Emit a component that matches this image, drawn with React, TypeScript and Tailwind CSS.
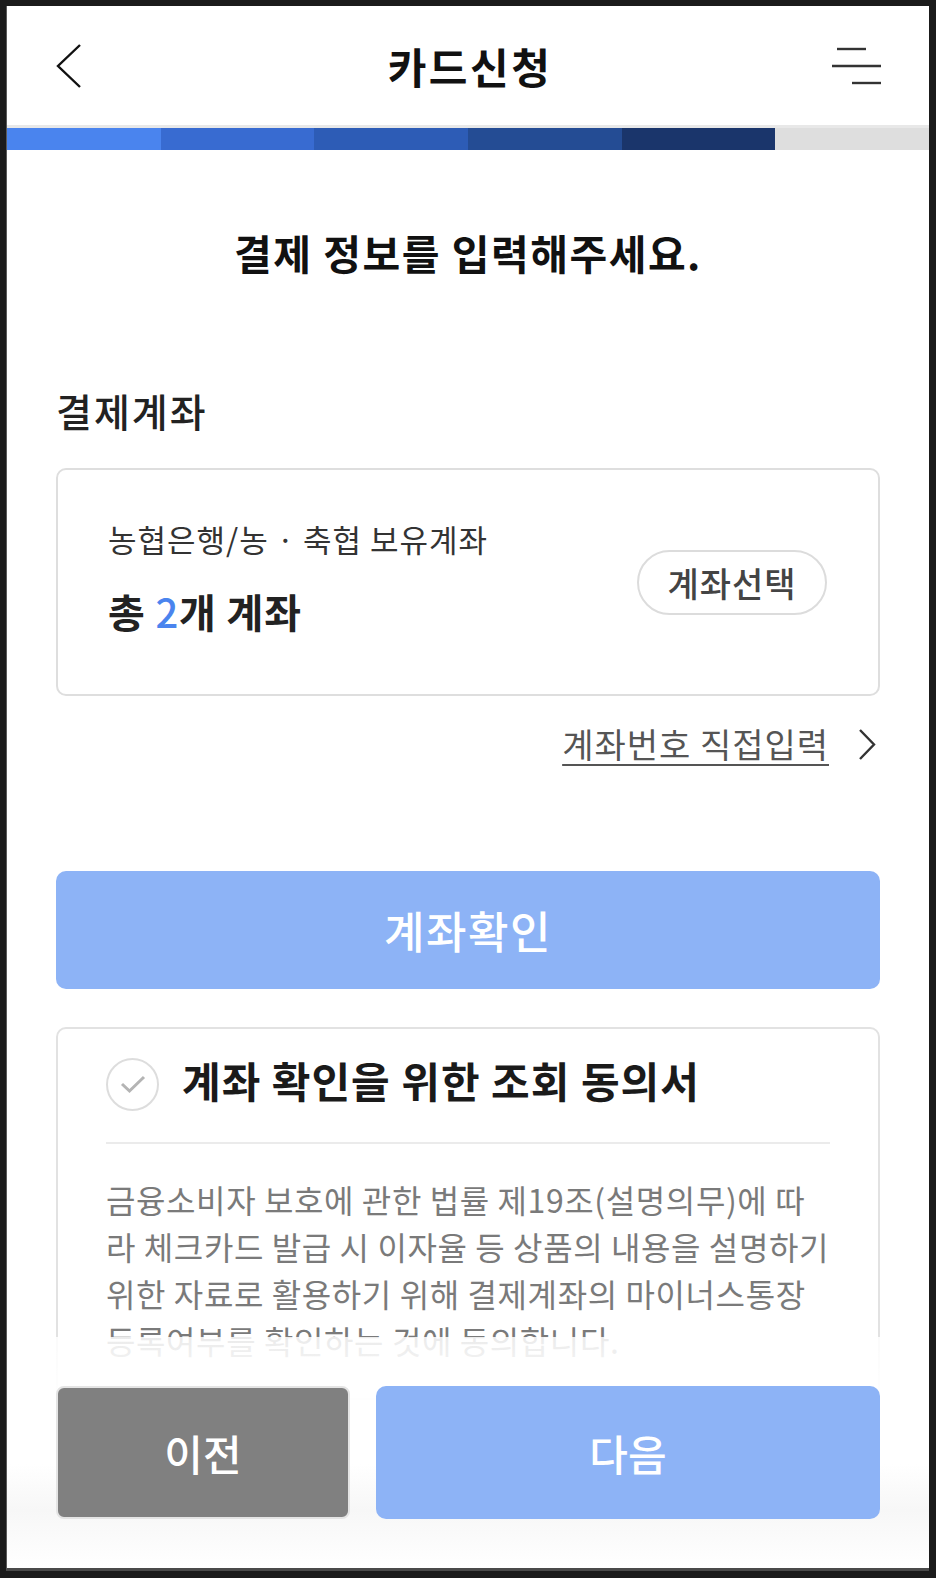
import React from "react";

const steps = ["bg-[#4a84ee]", "bg-[#386bd1]", "bg-[#2d5cb6]", "bg-[#244c94]", "bg-[#1a356b]", "bg-[#dedede]"];

const consentLines = [
  "금융소비자 보호에 관한 법률 제19조(설명의무)에 따",
  "라 체크카드 발급 시 이자율 등 상품의 내용을 설명하기",
  "위한 자료로 활용하기 위해 결제계좌의 마이너스통장",
  "등록여부를 확인하는 것에 동의합니다.",
];

function BackIcon() {
  return (
    <svg width="26" height="44" viewBox="0 0 26 44" fill="none">
      <polyline points="24,1 2,22 24,43" stroke="#111" strokeWidth="2.4" />
    </svg>
  );
}

function MenuIcon() {
  return (
    <svg width="52" height="40" viewBox="0 0 52 40" fill="none" stroke="#333" strokeWidth="2.4">
      <line x1="5" y1="3" x2="34" y2="3" />
      <line x1="0" y1="20" x2="49" y2="20" />
      <line x1="20" y1="37" x2="49" y2="37" />
    </svg>
  );
}

export default function App() {
  return (
    <div
      className="w-[936px] h-[1578px] bg-[#1b1b1b] pt-[6px] pl-[6px] pr-[7px] pb-[7px]"
      style={{ fontFamily: '"Noto Sans CJK KR", "Noto Sans", sans-serif' }}
    >
      <div className="relative h-[1565px] bg-white border-l border-[#5a5a5a] border-b-[3px] border-b-[#4a4a4a] overflow-hidden">
        {/* header */}
        <div className="h-[119px] flex items-center pl-[49px] pr-[45px]">
          <div className="w-[60px]">
            <BackIcon />
          </div>
          <h1 className="flex-1 text-center text-[42px] tracking-[2.5px] font-bold text-[#111]">카드신청</h1>
          <div className="w-[60px] flex justify-end">
            <MenuIcon />
          </div>
        </div>
        <div className="h-[3px] bg-[#e8e8e8]" />
        <div className="flex h-[22px]">
          {steps.map((c, i) => (
            <div key={i} className={`flex-1 ${c}`} />
          ))}
        </div>

        <div className="px-[49px]">
          <h2 className="mt-[76px] text-center text-[41px] leading-[52px] tracking-[1.5px] font-bold text-[#111]">
            결제 정보를 입력해주세요.
          </h2>

          <div className="mt-[108px] text-[39px] leading-[48px] tracking-[2px] font-medium text-[#222]">결제계좌</div>

          {/* account card */}
          <div className="mt-[34px] h-[228px] border-2 border-[#dedede] rounded-[10px] flex justify-between pl-[50px] pr-[51px]">
            <div className="pt-[49px]">
              <div className="text-[31px] leading-[40px] tracking-[1px] text-[#333]">농협은행/농 · 축협 보유계좌</div>
              <div className="mt-[27px] text-[40px] leading-[50px] tracking-[0.8px] font-bold text-[#222]">
                총 <span className="text-[#4a84ee] font-medium">2</span>개 계좌
              </div>
            </div>
            <button className="self-center h-[65px] w-[190px] rounded-full border-2 border-[#dcdcdc] text-[34px] tracking-[1px] font-medium text-[#444]">
              계좌선택
            </button>
          </div>

          <div className="mt-[26px] flex items-center justify-end gap-[30px] pr-[4px]">
            <span className="text-[34px] leading-[44px] tracking-[1px] text-[#555] underline underline-offset-[6px] decoration-2">
              계좌번호 직접입력
            </span>
            <svg width="17" height="31" viewBox="0 0 17 31" fill="none">
              <polyline points="1,1 15,15.5 1,30" stroke="#333" strokeWidth="2.4" />
            </svg>
          </div>

          <button className="mt-[105px] w-full h-[118px] rounded-[10px] bg-[#8db3f6] text-white text-[44px] tracking-[1.5px] font-medium">
            계좌확인
          </button>

          {/* consent card */}
          <div className="mt-[38px] border-2 border-[#e2e2e2] rounded-[10px] px-[48px] pt-[25px] pb-[34px]">
            <div className="flex items-center gap-[23px]">
              <div className="w-[53px] h-[53px] rounded-full border-2 border-[#dddddd] flex items-center justify-center">
                <svg width="26" height="20" viewBox="0 0 26 20" fill="none">
                  <polyline points="2,10 9.5,17 24,3" stroke="#b4b4b4" strokeWidth="3" />
                </svg>
              </div>
              <div className="pb-[8px] text-[42px] leading-[52px] tracking-[1px] font-bold text-[#1a1a1a]">
                계좌 확인을 위한 조회 동의서
              </div>
            </div>
            <div className="mt-[28px] h-[2px] bg-[#ebebeb]" />
            <div className="mt-[32px] text-[32px] leading-[47px] tracking-[0.6px] text-[#7a7a7a]">
              {consentLines.map((l) => (
                <div key={l} className="whitespace-nowrap">
                  {l}
                </div>
              ))}
            </div>
          </div>
        </div>

        {/* bottom bar over content */}
        <div className="absolute left-0 right-0 bottom-0 h-[231px] bg-[linear-gradient(to_bottom,rgba(255,255,255,0.85)_0%,rgba(255,255,255,0.97)_25%,#ffffff_55%,#f7f7f7_75%,#ffffff_100%)] px-[49px] pt-[49px]">
          <div className="flex gap-[26px] h-[133px]">
            <button className="w-[294px] rounded-[8px] border-2 border-[#e4e4e4] bg-[#808080] text-white text-[42px] font-medium">
              이전
            </button>
            <button className="flex-1 rounded-[10px] bg-[#8db3f6] text-white text-[42px] font-medium">다음</button>
          </div>
        </div>
      </div>
    </div>
  );
}
